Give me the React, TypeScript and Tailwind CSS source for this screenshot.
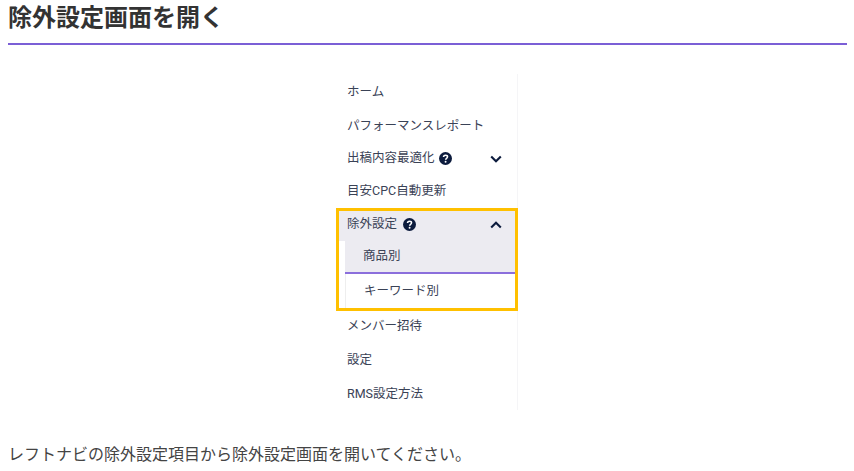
const font = "font-['Roboto','Noto_Sans_CJK_JP',sans-serif]";

function HelpIcon() {
  return (
    <svg viewBox="0 0 16 16" className="w-[13px] h-[13px] shrink-0">
      <circle cx="8" cy="8" r="8" fill="#0c1b3d" />
      <path d="M5.6 6.2c0-1.4 1-2.3 2.5-2.3s2.4.9 2.4 2c0 1.9-2.3 1.8-2.3 3.6" fill="none" stroke="#fff" strokeWidth="1.9" />
      <circle cx="8.1" cy="12" r="1.2" fill="#fff" />
    </svg>
  );
}

function Chevron({ up }: { up?: boolean }) {
  return (
    <svg viewBox="0 0 12 8" className="w-[12px] h-[8px]">
      <path d={up ? "M1.2 6.6 6 1.8l4.8 4.8" : "M1.2 1.4 6 6.2l4.8-4.8"} fill="none" stroke="#0c1b3d" strokeWidth="2.1" />
    </svg>
  );
}

function Item({ label, h = "h-[34px]" }: { label: string; h?: string }) {
  return <div className={`${h} flex items-center pl-[10px]`}>{label}</div>;
}

export default function App() {
  return (
    <div className={`${font} w-[854px] h-[471px] overflow-hidden bg-white pl-2 pr-[7px] text-[#333]`}>
      <h2 className="h-[45px] pt-[3px] border-b-2 border-[#7b5fd6] text-[24px] leading-[30px] font-bold text-[#333]">
        除外設定画面を開く
      </h2>

      <div className="flex justify-center mt-[29px]">
        <nav className="relative w-[181px] h-[336px] border-r border-[#f5f5f7] text-[12.5px] text-[#3a4256]">
          <Item label="ホーム" h="h-[36px]" />
          <Item label="パフォーマンスレポート" h="h-[32px]" />
          <div className="h-[33px] flex items-center pl-[10px]">
            <span>出稿内容最適化</span>
            <span className="ml-[4px]"><HelpIcon /></span>
            <span className="ml-auto mr-[15px] flex"><Chevron /></span>
          </div>
          <Item label="目安CPC自動更新" h="h-[33px]" />

          <div className="h-[33px] flex items-center pl-[10px] bg-[#ecebf1]">
            <span>除外設定</span>
            <span className="ml-[6px]"><HelpIcon /></span>
            <span className="ml-auto mr-[15px] flex"><Chevron up /></span>
          </div>
          <div className="ml-[8px] mb-px">
            <div className="h-[33px] flex items-center pl-[18px] bg-[#ecebf1] border-b-2 border-[#8b6fdc]">商品別</div>
            <div className="h-[34px] flex items-center pl-[18px] border-l border-[#eeeeee]">キーワード別</div>
          </div>

          <Item label="メンバー招待" />
          <Item label="設定" />
          <Item label="RMS設定方法" />

          {/* highlight frame */}
          <div className="absolute left-[-1px] top-[134px] w-[182px] h-[103px] border-[3px] border-[#ffc000]" />
        </nav>
      </div>

      <p className="mt-[33px] text-[16px] leading-[24px] text-[#444]">
        レフトナビの除外設定項目から除外設定画面を開いてください。
      </p>
    </div>
  );
}
